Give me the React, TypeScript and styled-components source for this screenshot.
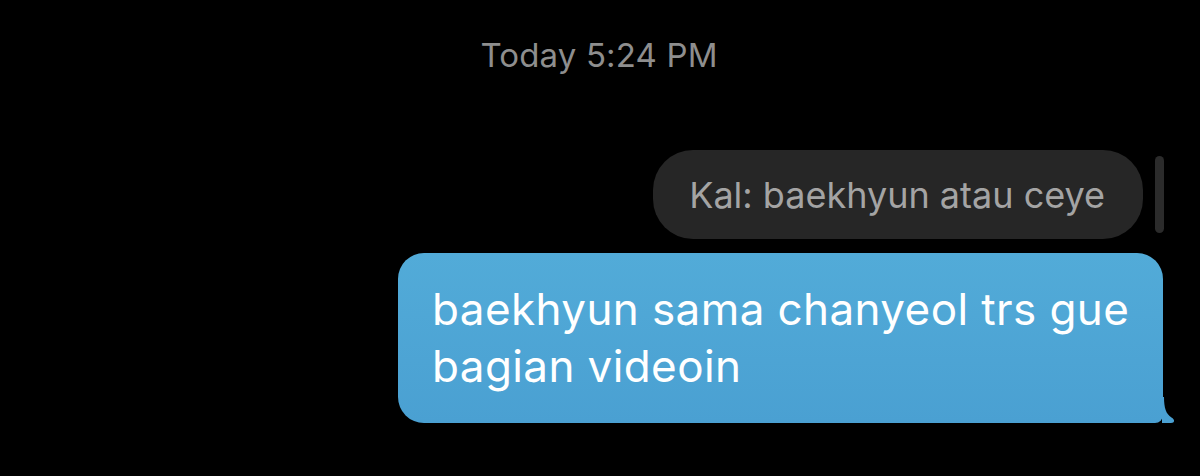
import React from "react";
import styled, { createGlobalStyle } from "styled-components";

const GlobalStyle = createGlobalStyle`
  html, body {
    margin: 0;
    padding: 0;
    background: #000;
  }
  body {
    font-family: "Inter", "Liberation Sans", sans-serif;
    -webkit-font-smoothing: antialiased;
  }
`;

const Screen = styled.main`
  width: 1200px;
  height: 476px;
  background: #000;
  display: flex;
  flex-direction: column;
  box-sizing: border-box;
  padding: 35px 36px 0 0;
  overflow: hidden;
`;

const Timestamp = styled.div`
  align-self: center;
  padding-left: 34px;
  font-size: 33px;
  line-height: 40px;
  color: #8e8e8e;
  letter-spacing: 0.15px;
`;

const MessageRow = styled.div<{ $gap?: number; $top?: number }>`
  display: flex;
  justify-content: flex-end;
  align-items: center;
  gap: ${(p) => p.$gap ?? 0}px;
  margin-top: ${(p) => p.$top ?? 0}px;
`;

const QuoteBubble = styled.div`
  height: 89px;
  box-sizing: border-box;
  padding: 0 38px 0 36px;
  display: flex;
  align-items: center;
  background: #262626;
  border-radius: 40px;
  color: #a4a4a4;
  font-size: 36px;
  line-height: 44px;
  white-space: nowrap;
`;

const ScrollThumb = styled.div`
  width: 9px;
  height: 77px;
  border-radius: 5px;
  background: #2b2b2b;
`;

const SentBubble = styled.div`
  position: relative;
  max-width: 765px;
  box-sizing: border-box;
  margin-right: 1px;
  padding: 28px 30px 28px 34px;
  background: linear-gradient(180deg, #52abd8 0%, #4aa0d2 100%);
  border-radius: 26px 26px 8px 26px;
  color: #ffffff;
  font-size: 44px;
  line-height: 57px;
  letter-spacing: 0.4px;
`;

const Tail = styled.svg`
  position: absolute;
  right: -13px;
  bottom: 0;
  width: 14px;
  height: 26px;
  display: block;
`;

export default function App() {
  return (
    <>
      <GlobalStyle />
      <Screen>
        <Timestamp>Today 5:24 PM</Timestamp>
        <MessageRow $gap={12} $top={75}>
          <QuoteBubble>Kal: baekhyun atau ceye</QuoteBubble>
          <ScrollThumb />
        </MessageRow>
        <MessageRow $top={14}>
          <SentBubble>
            baekhyun sama chanyeol trs gue bagian videoin
            <Tail viewBox="0 0 14 26" aria-hidden="true">
              <path
                d="M0 0 H2 C2 11 4 17 9.5 20.5 C13 22.5 13 26 9 26 H0 Z"
                fill="#4aa0d2"
              />
            </Tail>
          </SentBubble>
        </MessageRow>
      </Screen>
    </>
  );
}
